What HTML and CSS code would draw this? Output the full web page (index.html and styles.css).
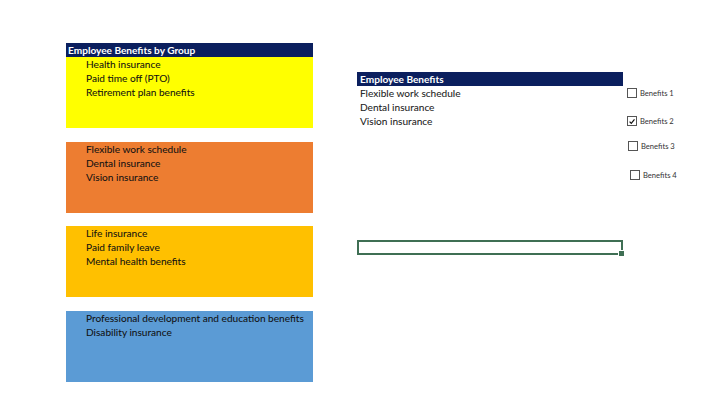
FILE: index.html
```html
<!DOCTYPE html>
<html>
<head>
<meta charset="utf-8">
<link rel="stylesheet" href="styles.css">
</head>
<body>
<div class="sheet">
  <div class="groups">
    <div class="hdr hdr-left">Employee Benefits by Group</div>
    <div class="block yellow">
      <div class="row">Health insurance</div>
      <div class="row">Paid time off (PTO)</div>
      <div class="row">Retirement plan benefits</div>
    </div>
    <div class="block orange">
      <div class="row">Flexible work schedule</div>
      <div class="row">Dental insurance</div>
      <div class="row">Vision insurance</div>
    </div>
    <div class="block gold">
      <div class="row">Life insurance</div>
      <div class="row">Paid family leave</div>
      <div class="row">Mental health benefits</div>
    </div>
    <div class="block blue">
      <div class="row">Professional development and education benefits</div>
      <div class="row">Disability insurance</div>
    </div>
  </div>

  <div class="result">
    <div class="hdr hdr-right">Employee Benefits</div>
    <div class="list">
      <div class="row">Flexible work schedule</div>
      <div class="row">Dental insurance</div>
      <div class="row">Vision insurance</div>
    </div>
    <div class="selected"><span class="handle"></span></div>
  </div>

  <div class="checks">
    <label class="chk c1"><span class="box"></span>Benefits 1</label>
    <label class="chk c2"><span class="box on"><svg viewBox="0 0 9 9" width="9" height="9"><path d="M1.8 4.6 L3.7 6.6 L7.3 2.2" fill="none" stroke="#111" stroke-width="1.4"/></svg></span>Benefits 2</label>
    <label class="chk c3"><span class="box"></span>Benefits 3</label>
    <label class="chk c4"><span class="box"></span>Benefits 4</label>
  </div>
</div>
</body>
</html>
```

FILE: styles.css
```css
html, body {
  margin: 0;
  padding: 0;
  background: #ffffff;
}
body {
  width: 720px;
  height: 405px;
  overflow: hidden;
  font-family: Lato, "Open Sans", sans-serif;
  font-size: 10.1px;
  color: #111111;
}
.sheet {
  display: flex;
  align-items: flex-start;
  padding: 43px 0 0 66px;
}
.groups {
  width: 247px;
  display: flex;
  flex-direction: column;
}
.hdr {
  height: 14px;
  line-height: 15px;
  background: #0b1f5e;
  color: #ffffff;
  font-weight: bold;
  white-space: nowrap;
}
.hdr-left { padding-left: 2px; }
.hdr-right { padding-left: 3px; }
.block {
  height: 71px;
  padding-left: 20px;
  box-sizing: border-box;
}
.orange { margin-top: 14px; }
.gold { margin-top: 13px; }
.blue { margin-top: 14px; }
.row {
  height: 14px;
  line-height: 15px;
  white-space: nowrap;
  -webkit-text-stroke: 0.06px currentColor;
}
.yellow { background: #ffff00; }
.orange { background: #ed7d31; }
.gold { background: #ffc000; }
.blue { background: #5b9bd5; }

.result {
  width: 266px;
  margin-left: 44px;
  margin-top: 29px;
  display: flex;
  flex-direction: column;
}
.list {
  padding-left: 3px;
  height: 154px;
  color: #1a1a1a;
}
.selected {
  position: relative;
  height: 15px;
  box-sizing: border-box;
  border: 2px solid #3f6f54;
}
.handle {
  position: absolute;
  right: -4px;
  bottom: -4px;
  width: 5px;
  height: 5px;
  background: #3f6f54;
  border: 1px solid #fff;
}

.checks {
  margin-left: 4px;
  margin-top: 45px;
  display: flex;
  flex-direction: column;
  font-size: 7.6px;
  color: #333;
}
.chk {
  display: flex;
  align-items: center;
  height: 10px;
  white-space: nowrap;
}
.box {
  width: 10px;
  height: 10px;
  box-sizing: border-box;
  border: 1px solid #555;
  margin-right: 3px;
  background: #fff;
  display: flex;
  align-items: center;
  justify-content: center;
}
.box svg { display: block; }
.c2 { margin-top: 18px; }
.c3 { margin-top: 15px; padding-left: 1px; }
.c4 { margin-top: 19px; padding-left: 3px; }
```
